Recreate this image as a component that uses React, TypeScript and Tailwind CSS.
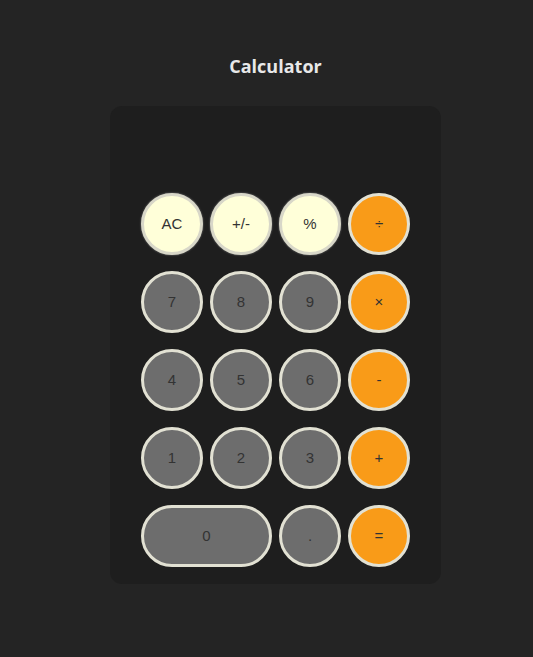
import React from 'react';

type Kind = 'fn' | 'num' | 'op';

interface Key {
  label: string;
  kind: Kind;
  wide?: boolean;
}

const KEYS: Key[] = [
  { label: 'AC', kind: 'fn' },
  { label: '+/-', kind: 'fn' },
  { label: '%', kind: 'fn' },
  { label: '÷', kind: 'op' },
  { label: '7', kind: 'num' },
  { label: '8', kind: 'num' },
  { label: '9', kind: 'num' },
  { label: '×', kind: 'op' },
  { label: '4', kind: 'num' },
  { label: '5', kind: 'num' },
  { label: '6', kind: 'num' },
  { label: '-', kind: 'op' },
  { label: '1', kind: 'num' },
  { label: '2', kind: 'num' },
  { label: '3', kind: 'num' },
  { label: '+', kind: 'op' },
  { label: '0', kind: 'num', wide: true },
  { label: '.', kind: 'num' },
  { label: '=', kind: 'op' },
];

const kindClass: Record<Kind, string> = {
  fn: 'bg-[#ffffd9] border-[#d8d7c8] shadow-[0_0_2px_#888]',
  num: 'bg-[#6d6d6d] border-[#e2e1d3]',
  op: 'bg-[#f99b18] border-[#e2e1d3]',
};

function CalcButton({ item }: { item: Key }) {
  return (
    <button
      className={`h-[62px] ${item.wide ? 'col-span-2 w-[131px]' : 'w-[62px]'} rounded-full border-[3px] text-[15px] text-[#333333] flex items-center justify-center ${kindClass[item.kind]}`}
    >
      {item.label}
    </button>
  );
}

export default function App() {
  return (
    <div className="min-h-[657px] bg-[#242424] pl-[18px] flex flex-col items-center font-['Liberation_Sans',Arial,sans-serif]">
      <h1 className="mt-[54px] text-[18px] font-bold text-[#e8e8e8] font-['Open_Sans','Noto_Sans',sans-serif] leading-[24px]">
        Calculator
      </h1>
      <div className="mt-[28px] w-[331px] h-[478px] bg-[#1e1e1e] rounded-[12px] pt-[87px] px-[31px]">
        <div className="grid grid-cols-[repeat(4,62px)] gap-x-[7px] gap-y-[16px]">
          {KEYS.map((k) => (
            <CalcButton key={k.label} item={k} />
          ))}
        </div>
      </div>
    </div>
  );
}
